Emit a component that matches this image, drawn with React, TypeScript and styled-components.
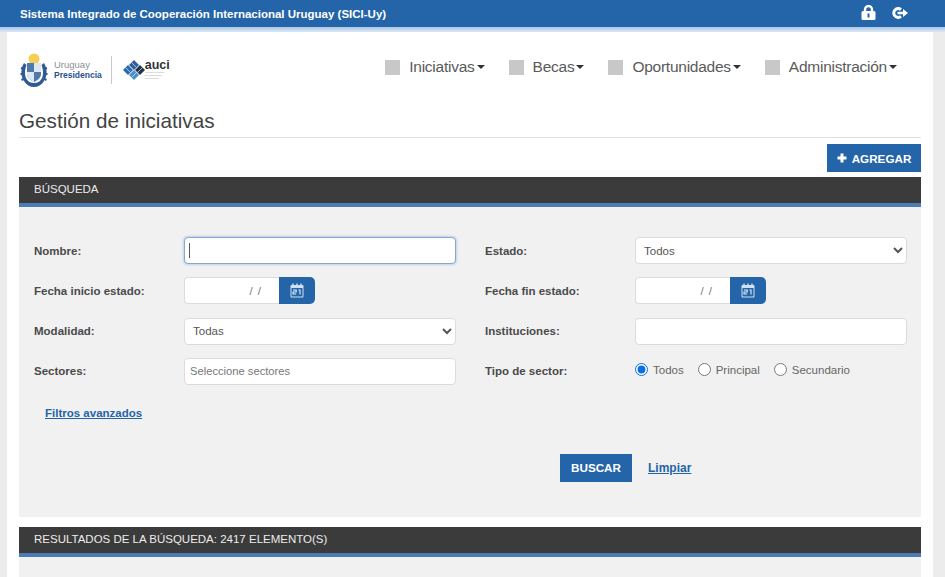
import React from 'react';
import styled, { createGlobalStyle } from 'styled-components';

const colorBlue = '#2464a8';
const colorDark = '#3b3b3b';
const colorPanel = '#f1f1f1';
const colorText = '#444';
const fontBase = '"Liberation Sans", Arial, sans-serif';

const GlobalStyle = createGlobalStyle`
  html, body {
    margin: 0;
    height: 100%;
    overflow: hidden;
    background: #ececec;
    font-family: ${fontBase};
    color: ${colorText};
  }
  * { box-sizing: border-box; }
`;

const Page = styled.div`
  width: 945px;
  height: 577px;
  overflow: hidden;
  display: flex;
  flex-direction: column;
`;

const TopBar = styled.header`
  flex: none;
  height: 27px;
  background: ${colorBlue};
  display: flex;
  align-items: center;
  justify-content: space-between;
  padding: 0 37px 0 20px;
  color: #fff;
`;

const TopTitle = styled.span`
  font-size: 11.5px;
  font-weight: bold;
`;

const TopIcons = styled.div`
  display: flex;
  align-items: center;
  gap: 16px;
  margin-bottom: 2px;
`;

const TopStrip = styled.div`
  flex: none;
  height: 5px;
  background: linear-gradient(#a9c6e6, #dce8f4);
`;

const Sheet = styled.main`
  flex: 1;
  margin: 0 12px 0 7px;
  background: #fff;
  padding: 0 12px;
  display: flex;
  flex-direction: column;
`;

const Masthead = styled.div`
  height: 69px;
  padding-top: 21px;
  display: flex;
  align-items: flex-start;
  justify-content: space-between;
`;

const LogoRow = styled.div`
  display: flex;
  align-items: center;
  height: 34px;
  margin-left: 1px;
`;

const LogoWords = styled.div`
  display: flex;
  flex-direction: column;
  margin-left: 6px;
  font-size: 9.5px;
  line-height: 10.5px;
  color: #8a8f96;
`;

const LogoStrong = styled.strong`
  color: #27528a;
  font-size: 8.5px;
`;

const LogoDivider = styled.div`
  width: 1px;
  height: 28px;
  background: #c9c9c9;
  margin: 0 10px 0 9px;
`;

const AuciWords = styled.div`
  display: flex;
  flex-direction: column;
  margin-left: -1px;
`;

const AuciName = styled.span`
  font-size: 12.5px;
  line-height: 11px;
  height: 11px;
  font-weight: bold;
  color: #2f3338;
`;

const AuciSmall = styled.span`
  font-size: 2.4px;
  line-height: 3px;
  height: 3px;
  color: #9a9a9a;
  white-space: nowrap;
`;

const Nav = styled.nav`
  display: flex;
  align-items: center;
  height: 28px;
  gap: 24px;
  margin-right: 24px;
`;

const NavItem = styled.a`
  display: flex;
  align-items: center;
  color: #5a5a5a;
  font-size: 15.5px;
  letter-spacing: -0.25px;
`;

const NavSquare = styled.span`
  width: 15px;
  height: 15px;
  background: #c8c8c8;
  margin-right: 9px;
`;

const Caret = styled.span`
  margin-left: 2px;
  border-top: 4px solid #333;
  border-left: 4px solid transparent;
  border-right: 4px solid transparent;
`;

const Heading = styled.h1`
  margin: 0;
  height: 37px;
  padding-top: 8px;
  font-size: 20.7px;
  line-height: 23px;
  font-weight: normal;
  color: #444;
  border-bottom: 1px solid #e2e2e2;
`;

const Actions = styled.div`
  display: flex;
  justify-content: flex-end;
  padding: 6px 0 5px;
`;

const AddButton = styled.button`
  width: 94px;
  height: 28px;
  border: 0;
  background: ${colorBlue};
  color: #fff;
  font: bold 11.7px ${fontBase};
  display: flex;
  align-items: center;
  justify-content: center;
  gap: 5px;
  padding: 0;
`;

const SectionBar = styled.div`
  flex: none;
  height: 30px;
  background: ${colorDark};
  border-bottom: 4px solid #4b7cb5;
  color: #ececec;
  font-size: 11.5px;
  line-height: 25px;
  padding-left: 15px;
`;

const Panel = styled.section`
  height: 310px;
  background: ${colorPanel};
  padding: 30px 15px 0;
  margin-bottom: 10px;
`;

const Grid = styled.div`
  display: grid;
  grid-template-columns: 150px 272px 179px 272px;
  grid-auto-rows: 27px;
  row-gap: 13.3px;
  align-items: center;
`;

const Label = styled.label<{ $right?: boolean }>`
  font-size: 11.5px;
  font-weight: bold;
  color: #4a4a4a;
  margin-left: ${props => (props.$right ? '29px' : '0')};
`;

const field = `
  height: 27px;
  border: 1px solid #dcdcdc;
  border-radius: 4px;
  background: #fff;
  font: 11.5px ${fontBase};
  color: #555;
  outline: none;
`;

const FocusWrap = styled.div`
  position: relative;
  height: 27px;
`;

const TextCaret = styled.span`
  position: absolute;
  left: 5px;
  top: 6px;
  width: 1px;
  height: 15px;
  background: #555;
`;

const TextInput = styled.input<{ $focused?: boolean }>`
  ${field}
  width: 100%;
  padding: 0 5px;
  font-size: 11.2px;
  ${props => (props.$focused ? 'border-color: #7fa9d6; box-shadow: 0 0 3px rgba(36, 100, 168, 0.45);' : '')}

  &::placeholder {
    color: #777;
    opacity: 1;
  }
`;

const Select = styled.select`
  ${field}
  width: 100%;
  padding: 0 4px;
`;

const DateGroup = styled.div`
  display: flex;
  width: 131px;
`;

const DateInput = styled.input`
  ${field}
  width: 95px;
  padding: 0 17px 0 0;
  text-align: right;
  letter-spacing: 1px;
  border-right: 0;
  border-radius: 4px 0 0 4px;
  color: #777;
`;

const DateButton = styled.span`
  width: 36px;
  height: 27px;
  background: ${colorBlue};
  border-radius: 0 5px 5px 0;
  display: flex;
  align-items: center;
  justify-content: center;
`;

const RadioGroup = styled.div`
  display: flex;
  align-items: center;
  gap: 14px;
  margin-top: -3px;
`;

const RadioLabel = styled.label`
  display: flex;
  align-items: center;
  font-size: 11.5px;
  color: #666;
`;

const Radio = styled.input`
  width: 13px;
  height: 13px;
  margin: 0 5px 0 0;
  accent-color: #0b6fe0;
`;

const AdvancedLink = styled.a`
  display: block;
  margin: 22px 0 0 11px;
  font-size: 11.5px;
  font-weight: bold;
  color: ${colorBlue};
  text-decoration: underline;
`;

const FormActions = styled.div`
  display: flex;
  align-items: center;
  gap: 16px;
  margin: 35px 0 0 526px;
`;

const SearchButton = styled.button`
  width: 72px;
  height: 28px;
  border: 0;
  padding: 0;
  background: ${colorBlue};
  color: #fff;
  font: bold 11.7px ${fontBase};
`;

const ClearLink = styled.a`
  font-size: 12px;
  font-weight: bold;
  color: ${colorBlue};
  text-decoration: underline;
`;

const ResultsBody = styled.div`
  flex: 1;
  background: ${colorPanel};
`;

const ShieldLogo = () => (
  <svg width="28" height="35" viewBox="0 0 28 35">
    <circle cx="14" cy="6" r="5.5" fill="#f6cf55" />
    <path d="M4 10c-3 5-4 12 0 18 2.500 4 6 6 10 6s7.500-2 10-6c4-6 3-13 0-18l-2.500 2c2 5 2 11 0 14-2 3-4.500 4-7.500 4s-5.500-1-7.500-4c-2-3-2-9 0-14z" fill="#2f5a96" />
    <path d="M7 10h14v11c0 4-3.500 6-7 8-3.500-2-7-4-7-8z" fill="#4f79ad" />
    <path d="M14 10h7v9h-7zM7 19h7v10c-3.500-2-7-4-7-8z" fill="#dfe7f1" />
    <path d="M1 15l3 1M0.500 21l3 0M1.500 27l3-1.500M27 15l-3 1M27.500 21l-3 0M26.500 27l-3-1.500" stroke="#2f5a96" strokeWidth="2" />
  </svg>
);

const AuciMark = () => (
  <svg width="24" height="22" viewBox="0 0 24 22">
    <path d="M12 1l5 5-5 5-5-5z" fill="#2f5f9e" />
    <path d="M18 6l5 5-5 5-5-5z" fill="#23344f" />
    <path d="M12 11l5 5-5 5-5-5z" fill="#4f8fc9" />
    <path d="M6 6l5 5-5 5-5-5z" fill="#2b6cae" />
    <path d="M9.500 3.500l5 5M3.500 8.500l5 5M15.500 13.500l5-5M9.500 18.500l5-5" stroke="#dbe8f4" strokeWidth="0.7" />
  </svg>
);

const LockIcon = () => (
  <svg width="15" height="15" viewBox="0 0 15 15">
    <path d="M4 7V4.500a3.500 3.500 0 0 1 7 0V7" fill="none" stroke="#fff" strokeWidth="2.400" />
    <rect x="0.500" y="6" width="14" height="9" rx="1.500" fill="#fff" />
    <rect x="6.500" y="8.500" width="2" height="4" fill={colorBlue} />
  </svg>
);

const ExitIcon = () => (
  <svg width="16" height="12" viewBox="0 0 16 12">
    <path d="M9 2.600A4.400 4.400 0 1 0 9 9.400" fill="none" stroke="#fff" strokeWidth="3" />
    <path d="M5.500 4.700h5.500V2L16 6l-5 4V7.300H5.500z" fill="#fff" />
  </svg>
);

const CalendarIcon = () => (
  <svg width="14" height="15" viewBox="0 0 14 15">
    <rect x="0.500" y="2" width="13" height="12.500" rx="1" fill="#cfe0f2" />
    <rect x="1.500" y="5" width="11" height="8.500" fill={colorBlue} />
    <path d="M3 0.500v3M7 0.500v3M11 0.500v3" stroke="#cfe0f2" strokeWidth="1.400" />
    <path d="M3 7h3.200v2H3v2h3.200M8.500 7h1.500v4.400" fill="none" stroke="#e6eff8" strokeWidth="1.100" />
  </svg>
);

const PlusIcon = () => (
  <svg width="10" height="10" viewBox="0 0 10 10">
    <path d="M5 0.500v9M0.500 5h9" stroke="#fff" strokeWidth="3" />
  </svg>
);

const navItems = ['Iniciativas', 'Becas', 'Oportunidades', 'Administración'];

const DateField = () => (
  <DateGroup>
    <DateInput type="text" readOnly value="/ /" />
    <DateButton><CalendarIcon /></DateButton>
  </DateGroup>
);

export default function App() {
  return (
    <Page>
      <GlobalStyle />
      <TopBar>
        <TopTitle>Sistema Integrado de Cooperación Internacional Uruguay (SICI-Uy)</TopTitle>
        <TopIcons>
          <LockIcon />
          <ExitIcon />
        </TopIcons>
      </TopBar>
      <TopStrip />
      <Sheet>
        <Masthead>
          <LogoRow>
            <ShieldLogo />
            <LogoWords>
              <span>Uruguay</span>
              <LogoStrong>Presidencia</LogoStrong>
            </LogoWords>
            <LogoDivider />
            <AuciMark />
            <AuciWords>
              <AuciName>auci</AuciName>
              <AuciSmall>Agencia Uruguaya</AuciSmall>
              <AuciSmall>de Cooperación</AuciSmall>
              <AuciSmall>Internacional</AuciSmall>
            </AuciWords>
          </LogoRow>
          <Nav>
            {navItems.map(item => (
              <NavItem key={item}>
                <NavSquare />
                {item}
                <Caret />
              </NavItem>
            ))}
          </Nav>
        </Masthead>
        <Heading>Gestión de iniciativas</Heading>
        <Actions>
          <AddButton><PlusIcon />AGREGAR</AddButton>
        </Actions>
        <SectionBar>BÚSQUEDA</SectionBar>
        <Panel>
          <Grid>
            <Label>Nombre:</Label>
            <FocusWrap>
              <TextInput type="text" $focused />
              <TextCaret />
            </FocusWrap>
            <Label $right>Estado:</Label>
            <Select defaultValue="Todos"><option>Todos</option></Select>

            <Label>Fecha inicio estado:</Label>
            <DateField />
            <Label $right>Fecha fin estado:</Label>
            <DateField />

            <Label>Modalidad:</Label>
            <Select defaultValue="Todas"><option>Todas</option></Select>
            <Label $right>Instituciones:</Label>
            <TextInput type="text" />

            <Label>Sectores:</Label>
            <TextInput type="text" placeholder="Seleccione sectores" />
            <Label $right>Tipo de sector:</Label>
            <RadioGroup>
              <RadioLabel><Radio type="radio" name="tipo" defaultChecked />Todos</RadioLabel>
              <RadioLabel><Radio type="radio" name="tipo" />Principal</RadioLabel>
              <RadioLabel><Radio type="radio" name="tipo" />Secundario</RadioLabel>
            </RadioGroup>
          </Grid>
          <AdvancedLink href="#">Filtros avanzados</AdvancedLink>
          <FormActions>
            <SearchButton>BUSCAR</SearchButton>
            <ClearLink href="#">Limpiar</ClearLink>
          </FormActions>
        </Panel>
        <SectionBar>RESULTADOS DE LA BÚSQUEDA: 2417 ELEMENTO(S)</SectionBar>
        <ResultsBody />
      </Sheet>
    </Page>
  );
}
